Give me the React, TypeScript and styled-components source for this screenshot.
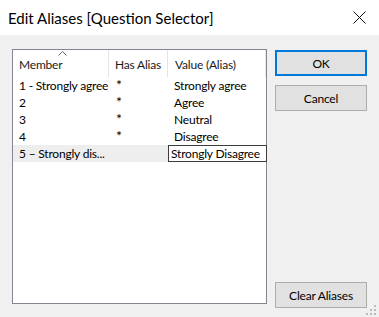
import React from 'react';
import styled, { createGlobalStyle } from 'styled-components';

const Global = createGlobalStyle`
  html, body { margin: 0; padding: 0; }
  body {
    width: 379px;
    height: 317px;
    overflow: hidden;
    font-family: Lato, "Noto Sans", sans-serif;
    font-size: 12px;
    letter-spacing: -0.2px;
    color: #000;
  }
`;

const Dialog = styled.div`
  width: 379px;
  height: 317px;
  display: flex;
  flex-direction: column;
  background: #f0f0f0;
`;

const TitleBar = styled.div`
  height: 35px;
  background: #fff;
  display: flex;
  align-items: center;
  justify-content: space-between;
  padding: 0 13px 0 8px;
  box-sizing: border-box;
`;

const Title = styled.div`
  font-size: 15px;
  letter-spacing: 0;
  line-height: 18px;
  margin-top: 1px;
`;

const Body = styled.div`
  flex: 1;
  position: relative;
  display: flex;
  padding: 14px 0 0 12px;
  gap: 8px;
`;

const ListBox = styled.div`
  width: 255px;
  height: 255px;
  box-sizing: border-box;
  border: 1px solid #828790;
  background: #fff;
  display: flex;
  flex-direction: column;
`;

const HeaderRow = styled.div`
  height: 27px;
  display: grid;
  grid-template-columns: 96px 59px 1fr;
`;

const HeaderCell = styled.div<{ $pad: number }>`
  display: flex;
  align-items: center;
  padding-left: ${(p) => p.$pad}px;
  padding-top: 1px;
  border-right: 1px solid #e5e5e5;
  color: #1a1a1a;
  white-space: nowrap;
  position: relative;
`;

const SortArrow = styled.svg`
  position: absolute;
  left: 45px;
  top: 1px;
`;

const Row = styled.div<{ $sel?: boolean }>`
  height: 17px;
  display: grid;
  grid-template-columns: 96px 59px 1fr;
  align-items: center;
  background: ${(p) => (p.$sel ? '#eeeeee' : 'transparent')};
`;

const Cell = styled.div<{ $pad: number }>`
  padding-left: ${(p) => p.$pad}px;
  white-space: nowrap;
  line-height: 17px;
`;

const Star = styled(Cell)`
  font-size: 14px;
  line-height: 17px;
  margin-top: -2px;
`;

const EditBox = styled.div`
  height: 17px;
  box-sizing: border-box;
  border: 1px solid #3c3c3c;
  background: #fff;
  margin-right: -1px;
  padding-left: 2px;
  line-height: 15px;
  white-space: nowrap;
`;

const Side = styled.div`
  display: flex;
  flex-direction: column;
  width: 92px;
  padding-top: 1px;
`;

const Button = styled.div<{ $primary?: boolean }>`
  height: 26px;
  box-sizing: border-box;
  background: #e1e1e1;
  border: ${(p) => (p.$primary ? '2px solid #0078d7' : '1px solid #adadad')};
  display: flex;
  align-items: center;
  justify-content: center;
  margin-bottom: 9px;
`;

const Spacer = styled.div`
  flex: 1;
`;

const Grip = styled.svg`
  position: absolute;
  right: 2px;
  bottom: 1px;
`;

const rows = [
  { member: '1 - Strongly agree', alias: '*', value: 'Strongly agree' },
  { member: '2', alias: '*', value: 'Agree' },
  { member: '3', alias: '*', value: 'Neutral' },
  { member: '4', alias: '*', value: 'Disagree' },
];

export default function App() {
  return (
    <Dialog>
      <Global />
      <TitleBar>
        <Title>Edit Aliases [Question Selector]</Title>
        <svg width="13" height="13" viewBox="0 0 13 13">
          <path d="M0.5 0.5 L12.5 12.5 M12.5 0.5 L0.5 12.5" stroke="#111" strokeWidth="1" />
        </svg>
      </TitleBar>
      <Body>
        <ListBox>
          <HeaderRow>
            <HeaderCell $pad={6}>
              Member
              <SortArrow width="9" height="5" viewBox="0 0 9 5">
                <path d="M0.5 4.5 L4.5 0.5 L8.5 4.5" stroke="#666" fill="none" strokeWidth="1" />
              </SortArrow>
            </HeaderCell>
            <HeaderCell $pad={6}>Has Alias</HeaderCell>
            <HeaderCell $pad={7}>Value (Alias)</HeaderCell>
          </HeaderRow>
          {rows.map((r) => (
            <Row key={r.member}>
              <Cell $pad={6}>{r.member}</Cell>
              <Star $pad={7}>{r.alias}</Star>
              <Cell $pad={6}>{r.value}</Cell>
            </Row>
          ))}
          <Row $sel>
            <Cell $pad={6}>5 – Strongly dis...</Cell>
            <Cell $pad={7}></Cell>
            <EditBox>Strongly Disagree</EditBox>
          </Row>
        </ListBox>
        <Side>
          <Button $primary>OK</Button>
          <Button>Cancel</Button>
          <Spacer />
          <Button>Clear Aliases</Button>
        </Side>
        <Grip width="11" height="11" viewBox="0 0 11 11">
          <g fill="#bcbcbc">
            <rect x="8" y="0" width="2" height="2" />
            <rect x="4" y="4" width="2" height="2" />
            <rect x="8" y="4" width="2" height="2" />
            <rect x="0" y="8" width="2" height="2" />
            <rect x="4" y="8" width="2" height="2" />
            <rect x="8" y="8" width="2" height="2" />
          </g>
        </Grip>
      </Body>
    </Dialog>
  );
}
